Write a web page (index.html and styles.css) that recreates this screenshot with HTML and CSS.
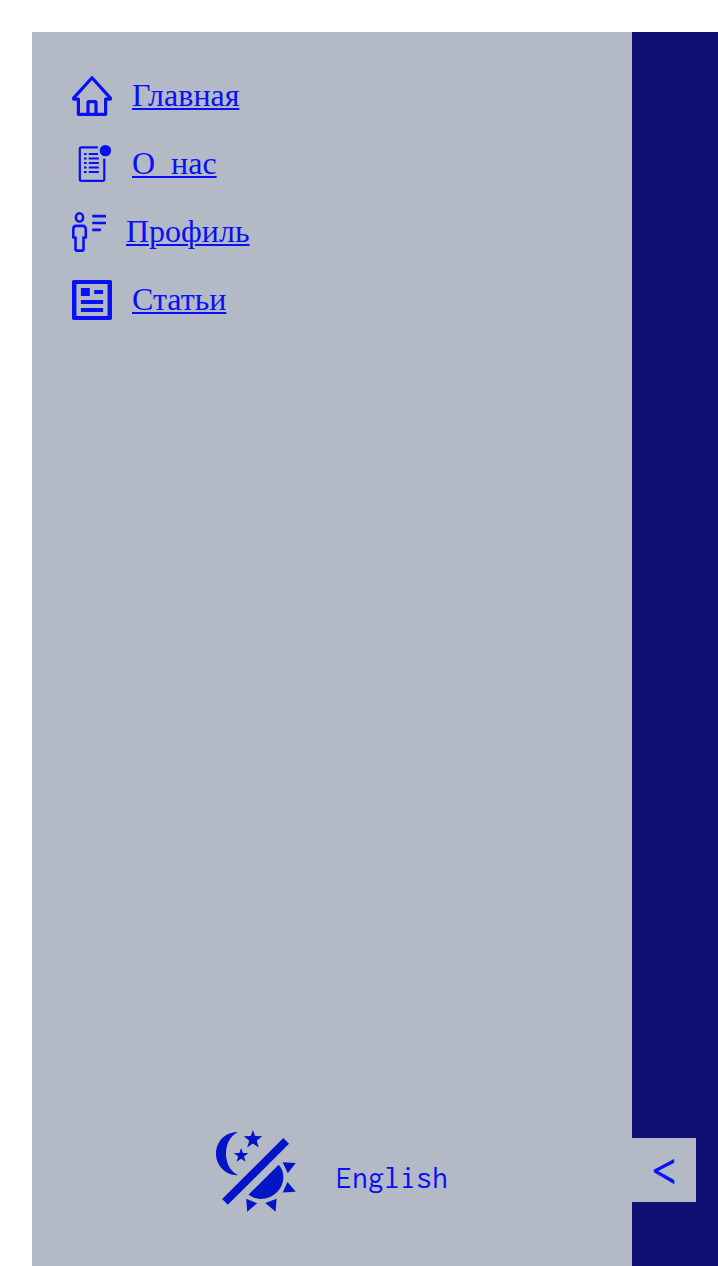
FILE: index.html
```html
<!DOCTYPE html>
<html lang="ru">
<head>
<meta charset="utf-8">
<title>Меню</title>
<link rel="stylesheet" href="styles.css">
</head>
<body>
<div class="page">
  <aside class="sidebar">
    <nav class="menu">
      <a class="item" href="#">
        <svg class="icon" viewBox="0 0 40 40" fill="none" stroke="currentColor" stroke-width="3.2" stroke-linejoin="round"><path d="M6.4 23.1H2.1a.6.6 0 0 1-.5-1L20 1.8l18.4 20.3a.6.6 0 0 1-.5 1h-4.3v15.2H6.4z"/><path d="M16 38V26.3a.7.7 0 0 1 .7-.7h6.6a.7.7 0 0 1 .7.7V38"/></svg>
        <span class="label">Главная</span>
      </a>
      <a class="item" href="#">
        <svg class="icon" viewBox="0 0 40 40" fill="none" stroke="currentColor" stroke-width="2.2"><path d="M25.8 3.3H9a1.2 1.2 0 0 0-1.2 1.2v31.1A1.2 1.2 0 0 0 9 36.8h22.1a1.2 1.2 0 0 0 1.2-1.2V14.8"/><path d="M12 10h2.6m2.1 0H26M12 14.5h2.6m2.1 0h10.1M12 19h2.6m2.1 0h10.1M12 23.5h2.6m2.1 0h10.1M12 28h2.6m2.1 0h10.1"/><circle cx="33.4" cy="6.6" r="5.7" fill="currentColor" stroke="none"/></svg>
        <span class="label">О&nbsp; нас</span>
      </a>
      <a class="item" href="#">
        <svg class="icon narrow" viewBox="0 0 34 40" fill="none" stroke="currentColor" stroke-width="2.6" stroke-linejoin="round"><ellipse cx="7.5" cy="5.4" rx="3.6" ry="4.1"/><path d="M4.2 13.9h6.6a3 3 0 0 1 3 3v8.6h-2.3v12.1a1 1 0 0 1-1 1h-6a1 1 0 0 1-1-1V25.5H1.3v-8.6a3 3 0 0 1 2.9-3z"/><path d="M20.2 4.1H34M20.2 11H34M20.2 17.9h8.7"/></svg>
        <span class="label">Профиль</span>
      </a>
      <a class="item" href="#">
        <svg class="icon" viewBox="0 0 40 40" fill="currentColor"><path fill-rule="evenodd" d="M1.8 0h36.4Q40 0 40 1.8v36.4q0 1.8-1.8 1.8H1.8Q0 40 0 38.2V1.8Q0 0 1.8 0zm2.6 4v32h31.2V4z"/><path d="M8.9 8h8.9v8H8.9zM22.2 10h8.9v4h-8.9zM8.9 20h22.2v4H8.9zM8.9 28h22.2v4H8.9z"/></svg>
        <span class="label">Статьи</span>
      </a>
    </nav>
    <div class="switchers">
      <button class="theme" type="button" aria-label="Тема">
        <svg class="theme-icon" viewBox="0 0 80 82" fill="currentColor"><path d="M22 2.3C10 1.3 0 11.2 0 23.6 0 36 10 45.8 22 45.2 14 41.5 10 33 10 23.6 10 14 14 6 22 2.3z"/><path d="M36.9 0l2.3 6.1 7 .1-5.5 4.5 2 6.8-5.8-4-5.7 4 2-6.8-5.5-4.5 7-.1zM25.1 18.1l1.8 4.8 5.5.1-4.4 3.5 1.6 5.3-4.5-3.1-4.5 3.1 1.6-5.3L17.8 23l5.5-.1z"/><path d="M67.3 8l5.7 5.7-61.2 61.1-5.7-5.7zM62.7 34.7C69.3 42 69 54 61.2 62c-8 8-21 9.3-28.7 2.6z"/><path d="M66.7 32.3l13.1.8-8 10.2zM71.5 51.9L79.8 61.7l-13.1.8zM30.2 68.7l10.9 4.5L31.2 81.8zM60.6 68.7l-1 13.1-10.3-8.8z"/></svg>
      </button>
      <button class="language" type="button">English</button>
    </div>
    <button class="toggle" type="button">&lt;</button>
  </aside>
</div>
</body>
</html>
```
FILE: styles.css
```css
* { box-sizing: border-box; }
body {
  margin: 0;
  background: #fff;
  font: 32px/36px "Liberation Serif", serif;
  color: #0910f5;
  overflow: hidden;
}
button {
  padding: 0;
  border: 0;
  background: none;
  color: inherit;
  font: 32px/36px Inconsolata, "Noto Sans Mono CJK SC", "Liberation Mono", monospace;
}
.page {
  height: 1234px;
  margin: 32px 0 0 32px;
  background: #0e0d72;
}
.sidebar {
  position: relative;
  display: flex;
  flex-direction: column;
  justify-content: space-between;
  width: 600px;
  height: 100%;
  padding: 44px 40px 54px;
  background: #b3b9c5;
}
.menu {
  display: flex;
  flex-direction: column;
  align-items: flex-start;
  gap: 28px;
}
.item {
  display: flex;
  align-items: center;
  gap: 20px;
  height: 40px;
  color: inherit;
  text-decoration: none;
}
.icon { display: block; width: 40px; height: 40px; }
.narrow { width: 34px; }
.label {
  padding-bottom: 2px;
  text-decoration: underline 2px;
  text-underline-offset: 2px;
}
.switchers {
  display: flex;
  justify-content: center;
  align-items: center;
  gap: 40px;
}
.theme { color: #0414c7; }
.theme-icon { display: block; width: 80px; height: 82px; }
.language { padding-top: 14px; }
.toggle {
  position: absolute;
  right: -64px;
  bottom: 64px;
  width: 64px;
  height: 64px;
  padding-top: 2px;
  background: #b3b9c5;
  font-size: 47px;
  line-height: 62px;
  -webkit-text-stroke: 0.4px currentColor;
}
```
